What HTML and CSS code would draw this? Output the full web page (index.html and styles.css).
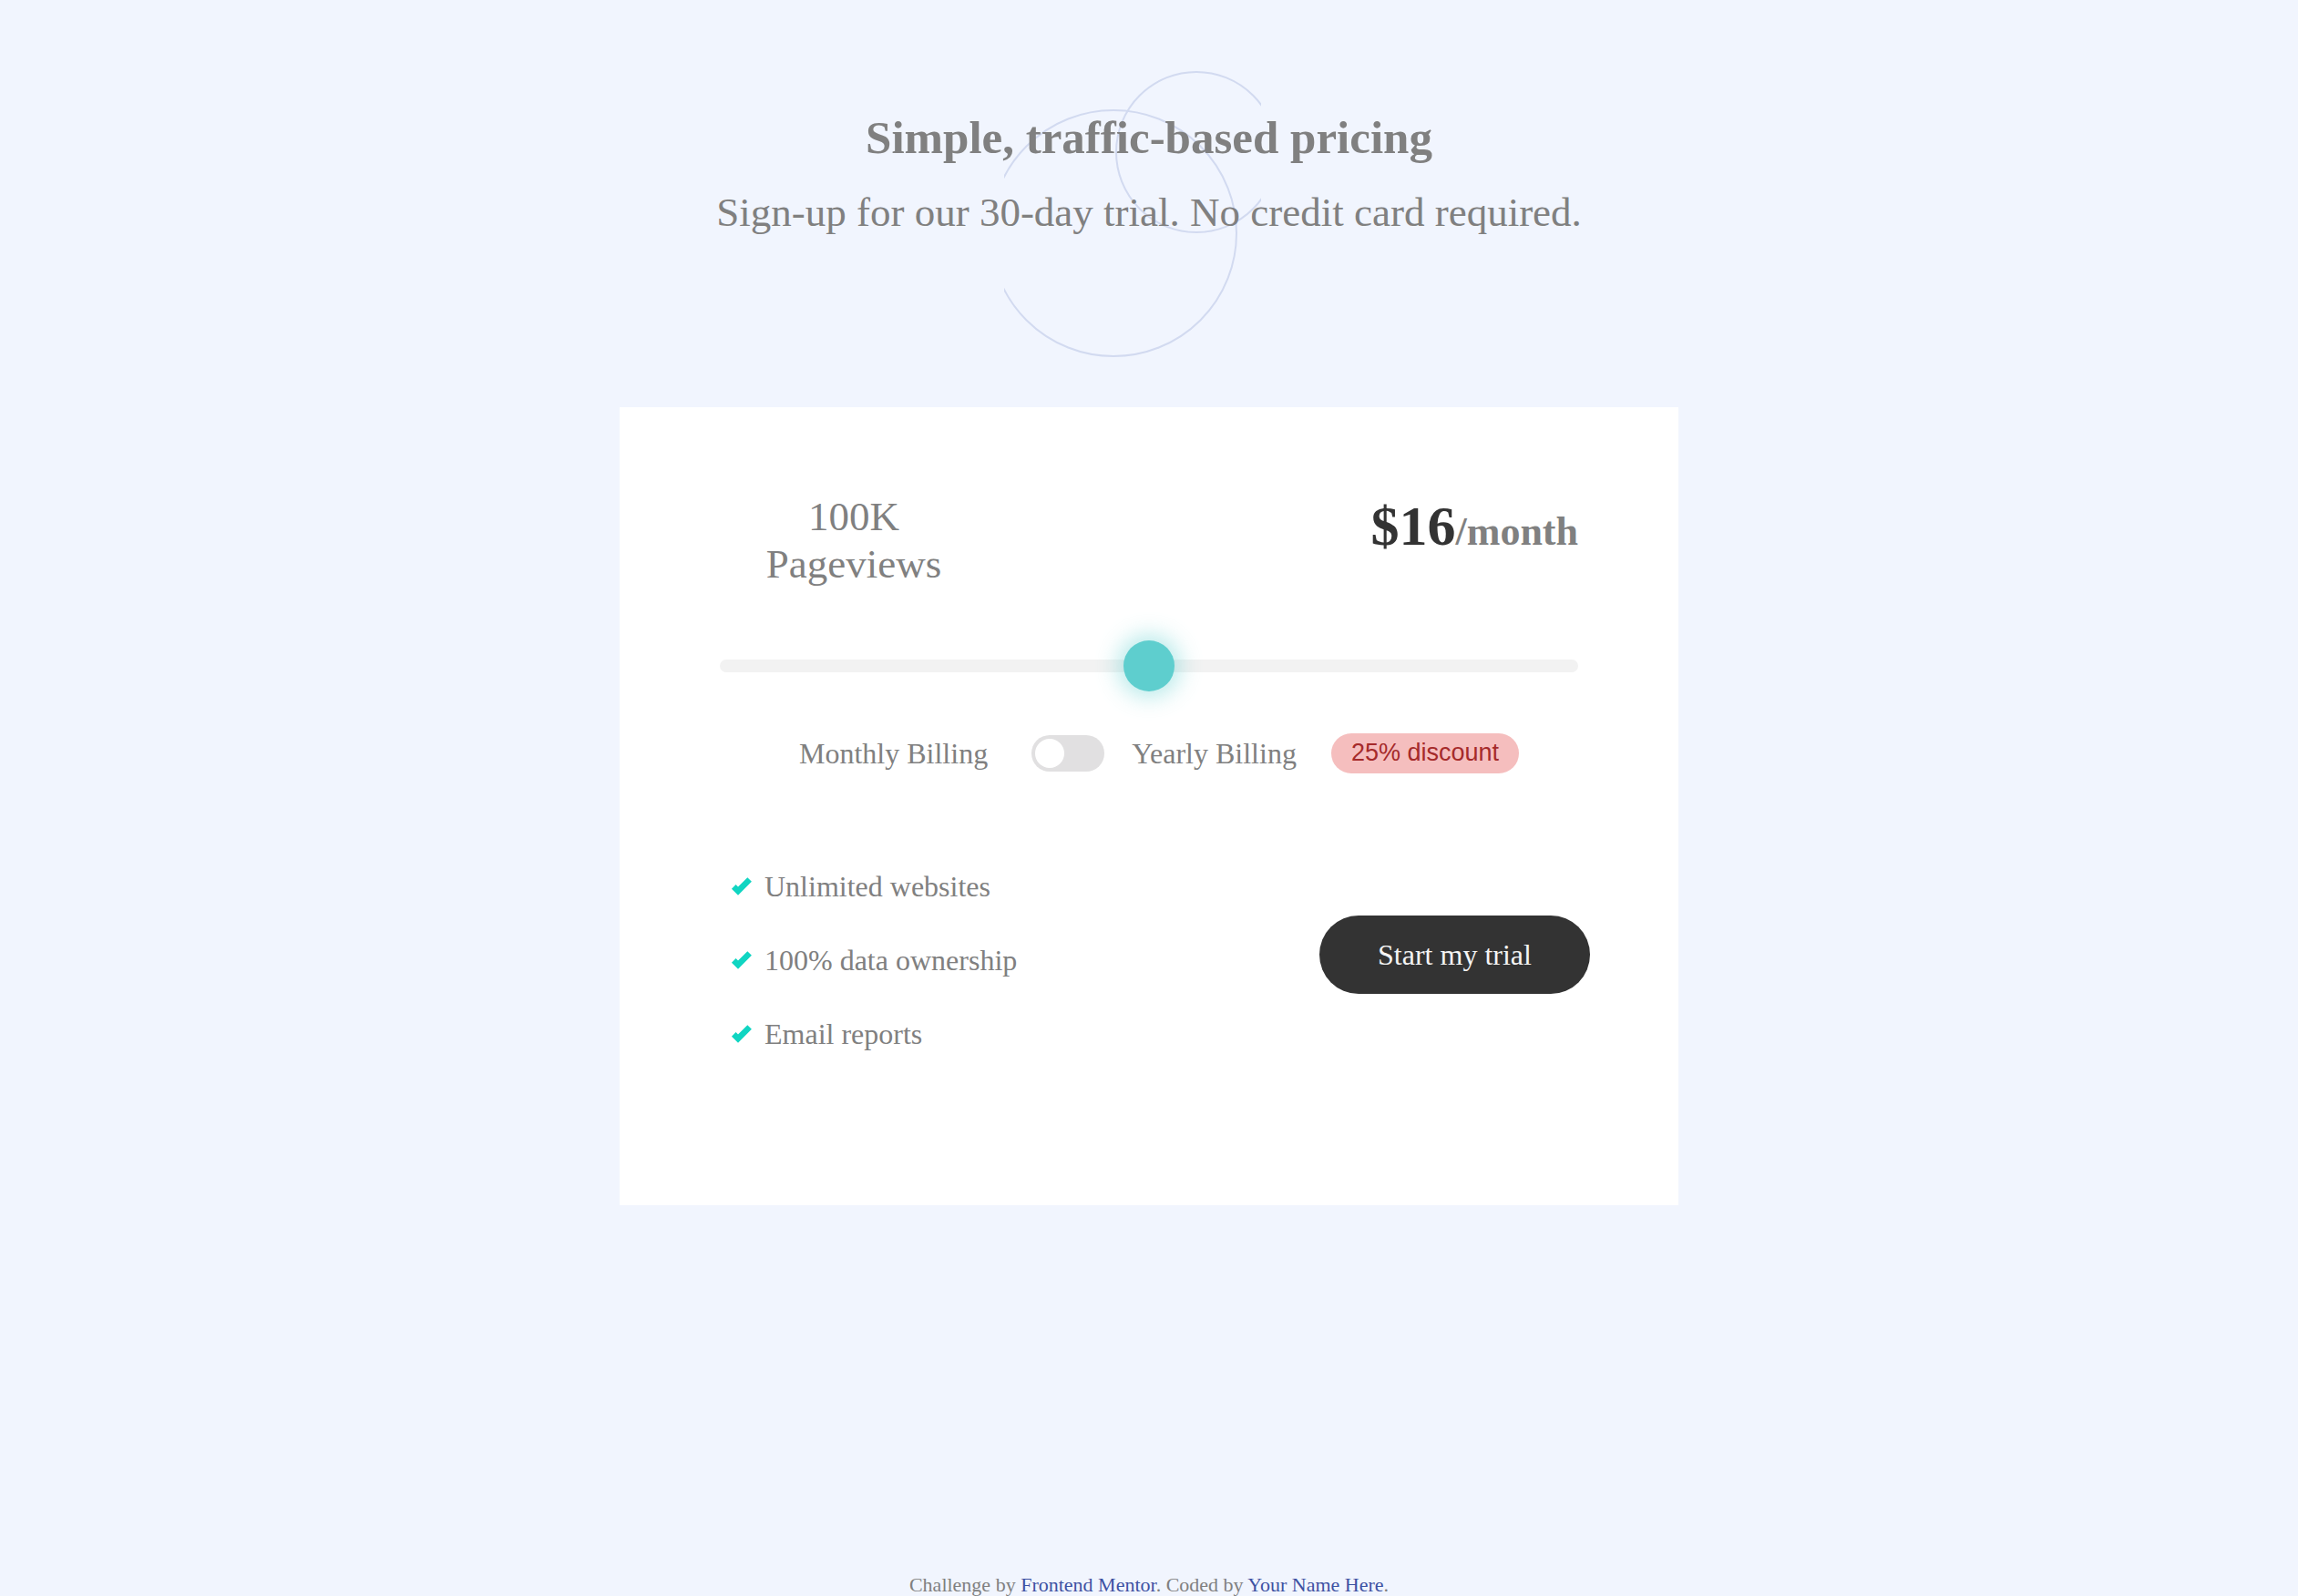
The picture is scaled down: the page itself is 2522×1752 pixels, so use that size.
FILE: index.html
```html
<!doctype html>
<html>
	<head>
		<meta charset="utf-8"/>
		<title>Interactive pricing component</title>
		<link rel="stylesheet" href="styles.css">
	</head>

	<body>
		<header class="intro">
			<svg class="circles" width="282" height="314" viewBox="0 0 282 314">
				<circle cx="120" cy="178" r="135"/>
				<circle cx="211" cy="89" r="88"/>
			</svg>
			<h1>Simple, traffic-based pricing</h1>
			<p>Sign-up for our 30-day trial. No credit card required.</p>
		</header>

		<main class="card">
			<section class="plan">
				<div class="views">100K<br>Pageviews</div>
				<div class="price"><strong>$16</strong><span>/month</span></div>
			</section>

			<div class="slider">
				<div class="track"></div>
				<div class="thumb"></div>
			</div>

			<section class="billing">
				<span>Monthly Billing</span>
				<div class="toggle"><div class="knob"></div></div>
				<span>Yearly Billing</span>
				<span class="discount">25% discount</span>
			</section>

			<section class="perks">
				<ul>
					<li><svg width="24" height="20" viewBox="0 0 9 8"><path d="M1 4.134l1.907 1.908L7.949 1"/></svg>Unlimited websites</li>
					<li><svg width="24" height="20" viewBox="0 0 9 8"><path d="M1 4.134l1.907 1.908L7.949 1"/></svg>100% data ownership</li>
					<li><svg width="24" height="20" viewBox="0 0 9 8"><path d="M1 4.134l1.907 1.908L7.949 1"/></svg>Email reports</li>
				</ul>
				<button class="trial">Start my trial</button>
			</section>
		</main>

		<footer class="attribution">
			Challenge by <a href="#">Frontend Mentor</a>.
			Coded by <a href="#">Your Name Here</a>.
		</footer>
	</body>
</html>
```

FILE: styles.css
```css
html, body {
	margin: 0;
	padding: 0;
}
body {
	background-color: #f1f5fe;
	color: #808080;
	font-family: "Liberation Serif", "Times New Roman", serif;
}
body * {
	box-sizing: border-box;
}

/* header */
.intro {
	position: relative;
	padding-top: 121px;
	text-align: center;
}
.circles {
	position: absolute;
	top: 78px;
	left: calc(50% - 159px);
	fill: none;
	stroke: #d2daf0;
	stroke-width: 2;
}
.intro h1 {
	position: relative;
	margin: 0;
	font-size: 51px;
	line-height: 60px;
	font-weight: bold;
}
.intro p {
	position: relative;
	margin: 26px 0 0 0;
	font-size: 45px;
	line-height: 52px;
}

/* card */
.card {
	display: block;
	width: 1162px;
	margin: 188px auto 0 auto;
	padding: 94px 110px 168px 110px;
	background-color: white;
}

.plan {
	display: flex;
	justify-content: space-between;
	align-items: flex-start;
}
.views {
	width: 294px;
	text-align: center;
	font-size: 45px;
	line-height: 52px;
}
.price {
	margin-top: 1px;
	font-size: 62px;
	line-height: 70px;
	font-weight: bold;
}
.price strong {
	color: #333;
}
.price span {
	font-size: 44px;
	line-height: 1;
}

.slider {
	position: relative;
	height: 56px;
	margin-top: 58px;
	padding-top: 21px;
}
.track {
	height: 14px;
	border-radius: 7px;
	background-color: #f2f2f2;
}
.thumb {
	position: absolute;
	top: 0;
	left: calc(50% - 28px);
	width: 56px;
	height: 56px;
	border-radius: 50%;
	background-color: #5ecece;
	box-shadow: 0 0 24px 6px rgba(94, 206, 206, 0.45);
}

.billing {
	display: flex;
	justify-content: center;
	align-items: center;
	height: 44px;
	margin-top: 46px;
	padding-left: 22px;
	font-size: 32px;
	line-height: 40px;
}
.toggle {
	width: 80px;
	height: 40px;
	margin: 0 30px 0 48px;
	padding: 4px;
	border-radius: 20px;
	background-color: #e1e0e1;
}
.knob {
	width: 32px;
	height: 32px;
	border-radius: 50%;
	background-color: white;
}
.discount {
	margin-left: 38px;
	padding: 0 22px;
	height: 44px;
	line-height: 42px;
	border-radius: 22px;
	background-color: #f5bebe;
	color: #a52a2a;
	font-family: "Liberation Sans", Arial, sans-serif;
	font-size: 27px;
}

.perks {
	display: flex;
	justify-content: space-between;
	align-items: flex-start;
	margin-top: 104px;
}
.perks ul {
	margin: 0;
	padding: 0 0 0 12px;
	list-style: none;
}
.perks li {
	display: flex;
	align-items: center;
	height: 40px;
	font-size: 32px;
	line-height: 40px;
}
.perks li + li {
	margin-top: 41px;
}
.perks li svg {
	margin-right: 13px;
	fill: none;
	stroke: #10d5c2;
	stroke-width: 2.6;
}
.trial {
	width: 297px;
	height: 86px;
	margin: 52px -13px 0 0;
	border: none;
	border-radius: 43px;
	background-color: #333;
	color: #f4f4f4;
	font-family: "Liberation Serif", "Times New Roman", serif;
	font-size: 32px;
}

.attribution {
	margin-top: 404px;
	text-align: center;
	font-size: 22px;
}
.attribution a {
	color: #3e52a3;
	text-decoration: none;
}
```
